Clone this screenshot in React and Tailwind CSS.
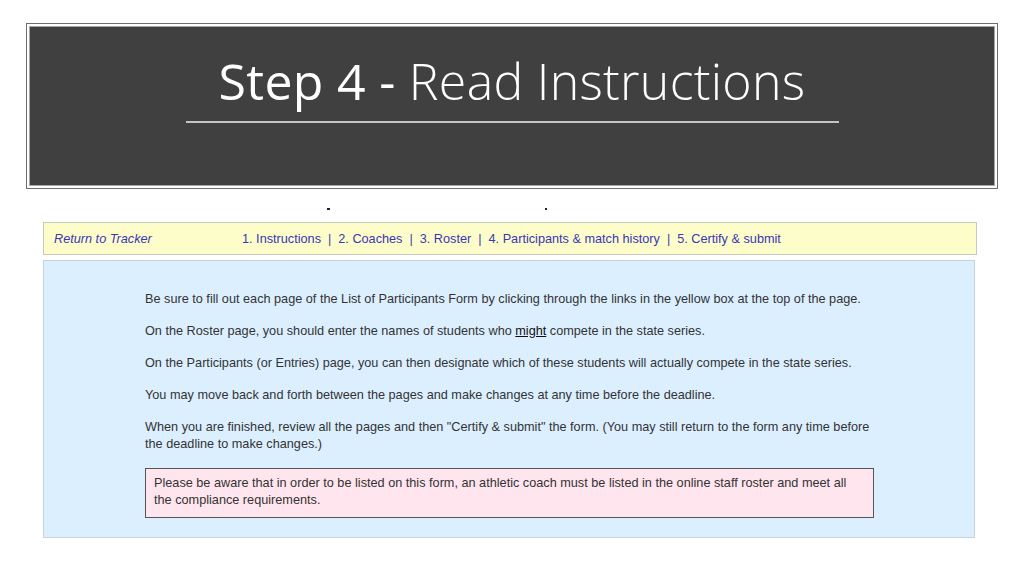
import React from 'react';

const links = [
    '1. Instructions',
    '2. Coaches',
    '3. Roster',
    '4. Participants & match history',
    '5. Certify & submit',
];

const App = () => {
    return (
        <div className="w-[1024px] h-[576px] bg-white overflow-hidden font-['Liberation_Sans',Arial,sans-serif]">
            {/* TITLE BOX */}
            <div className="pt-[23px] px-[26px]">
                <div className="h-[166px] border border-[#6e6e6e] p-[2px]">
                    <div className="h-full border border-[#a6a6a6] bg-[#404040] flex flex-col items-center">
                        <h1 className="mt-[22px] text-[50px] leading-[64px] text-white font-['Open_Sans',sans-serif] tracking-[0.3px]">
                            <span className="font-normal">Step 4 - </span>
                            <span className="font-light">Read Instructions</span>
                        </h1>
                        <div className="mt-[8px] w-[653px] h-[2px] bg-[#c4c4c4]" />
                    </div>
                </div>
            </div>

            {/* cropped text remnants */}
            <div className="h-[33px] relative">
                <span className="absolute left-[327px] top-[19px] w-[3px] h-[2px] bg-[#222]" />
                <span className="absolute left-[545px] top-[19px] w-[2px] h-[2px] bg-[#222]" />
            </div>

            {/* NAV BAR */}
            <div className="ml-[43px] w-[934px] h-[33px] border border-[#c9c9c0] bg-[#fdfdc9] flex items-center pt-[2px] text-[12.7px] text-[#3a36b8]">
                <span className="ml-[10px] w-[188px] italic">Return to Tracker</span>
                <div className="flex items-center">
                    {links.map((l, i) => (
                        <React.Fragment key={l}>
                            {i > 0 && <span className="mx-[7px] text-[#3a36b8]">|</span>}
                            <span>{l}</span>
                        </React.Fragment>
                    ))}
                </div>
            </div>

            {/* INSTRUCTIONS PANEL */}
            <div className="ml-[43px] mt-[5px] w-[932px] h-[278px] border border-[#c5d3df] bg-[#dcefff] pt-[30px] pl-[101px]">
                <div className="w-[729px] text-[12.7px] leading-[17px] text-[#333] space-y-[15px]">
                    <p>Be sure to fill out each page of the List of Participants Form by clicking through the links in the yellow box at the top of the page.</p>
                    <p>On the Roster page, you should enter the names of students who <span className="underline text-[#111]">might</span> compete in the state series.</p>
                    <p>On the Participants (or Entries) page, you can then designate which of these students will actually compete in the state series.</p>
                    <p>You may move back and forth between the pages and make changes at any time before the deadline.</p>
                    <p>When you are finished, review all the pages and then "Certify &amp; submit" the form. (You may still return to the form any time before the deadline to make changes.)</p>
                    <div className="border border-[#555] bg-[#ffe5ee] px-[8px] pt-[6px] pb-[8px]">
                        Please be aware that in order to be listed on this form, an athletic coach must be listed in the online staff roster and meet all the compliance requirements.
                    </div>
                </div>
            </div>
        </div>
    );
};

export default App;
